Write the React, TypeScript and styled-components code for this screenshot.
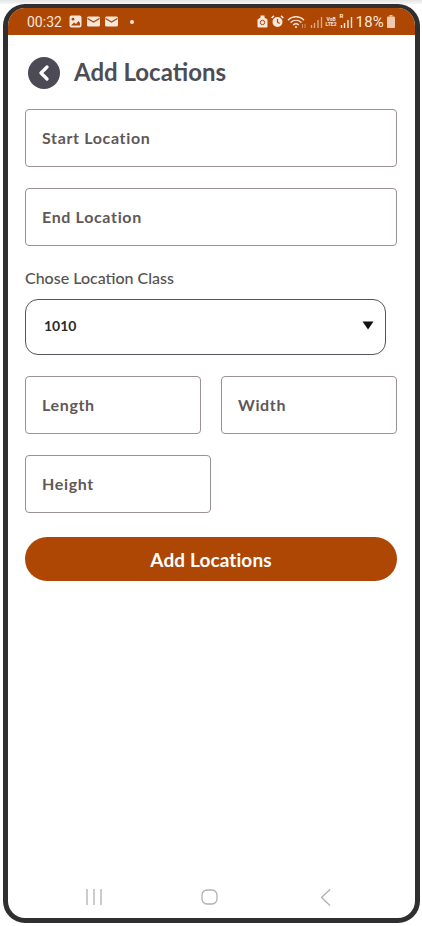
import React from 'react'
import styled, { createGlobalStyle } from 'styled-components'

const GlobalStyle = createGlobalStyle`
  html, body {
    margin: 0;
    padding: 0;
    background: #fff;
  }
  * {
    box-sizing: border-box;
  }
`

const Page = styled.div`
  width: 422px;
  height: 926px;
  padding: 4px 2px 3px 3px;
  background: linear-gradient(#e4e4e4 0, #f6f6f6 4px, #fff 4px);
  font-family: Lato, "Liberation Sans", sans-serif;
`

const Phone = styled.div`
  display: flex;
  flex-direction: column;
  height: 100%;
  overflow: hidden;
  background: #fff;
  border: 5px solid #2f2f31;
  border-top-width: 4px;
  border-radius: 22px;
`

const StatusBar = styled.div`
  display: flex;
  align-items: center;
  justify-content: space-between;
  flex: none;
  height: 27px;
  padding: 0 20px 0 19px;
  color: #f7e6da;
  background: #ae4604;
  font-family: Roboto, sans-serif;
`

const StatusGroup = styled.div`
  display: flex;
  align-items: center;
  gap: ${({ $gap }: { $gap: number }) => $gap}px;
`

const Clock = styled.span`
  margin-right: 2px;
  font-size: 14px;
`

const Battery = styled.span`
  font-size: 15px;
  letter-spacing: 0.2px;
`

const TinyLabel = styled.span`
  font-size: 5px;
  font-weight: 700;
  line-height: 5px;
  text-align: center;
`

const RoamingSignal = styled.span`
  position: relative;
  display: flex;
`

const RoamingMark = styled.span`
  position: absolute;
  top: -3px;
  left: 0;
  font-size: 6px;
  font-weight: 700;
  line-height: 6px;
`

const Dot = styled.span`
  width: 4px;
  height: 4px;
  margin-left: 7px;
  background: #f7e6da;
  border-radius: 50%;
`

const Content = styled.main`
  display: flex;
  flex: 1;
  flex-direction: column;
  padding: 0 18px 0 17px;
`

const Header = styled.header`
  display: flex;
  align-items: center;
  gap: 14px;
  height: 46px;
  margin: 15px 0 13px 3px;
`

const BackButton = styled.button`
  display: flex;
  align-items: center;
  justify-content: center;
  width: 32px;
  height: 32px;
  padding: 0;
  background: #4b4a55;
  border: none;
  border-radius: 50%;
`

const Title = styled.h1`
  margin: 0 0 3px;
  color: #4e4d55;
  font-size: 24px;
  font-weight: 700;
  line-height: 30px;
`

const Form = styled.form`
  display: flex;
  flex-direction: column;
`

const Field = styled.input<{ $width?: number }>`
  display: block;
  flex: none;
  width: ${({ $width }) => ($width ? `${$width}px` : '100%')};
  height: 58px;
  padding: 0 16px 2px;
  background: #fff;
  border: 1px solid #9a9294;
  border-radius: 4px;
  outline: none;
  font-family: inherit;
  font-size: 16px;
  font-weight: 700;
  letter-spacing: 0.65px;

  &::placeholder {
    color: #5f5858;
    opacity: 1;
  }
`

const Stack = styled.div`
  display: flex;
  flex-direction: column;
  gap: 21px;
`

const Label = styled.label`
  margin: 22px 0 11px;
  color: #55524f;
  font-size: 16px;
  font-weight: 500;
  line-height: 20px;
`

const Select = styled.div`
  display: flex;
  align-items: center;
  justify-content: space-between;
  width: 361px;
  height: 56px;
  padding: 0 11px 3px 18px;
  color: #2b2b2b;
  background: #fff;
  border: 1px solid #55545a;
  border-radius: 13px;
  font-size: 14px;
  font-weight: 700;
`

const SizeRow = styled.div`
  display: flex;
  justify-content: space-between;
  margin: 21px 0;
`

const SubmitButton = styled.button`
  width: 100%;
  height: 44px;
  margin-top: 24px;
  color: #fff;
  background: #ae4604;
  border: none;
  border-radius: 22px;
  font-family: inherit;
  font-size: 19px;
  font-weight: 700;
  letter-spacing: 0.1px;
`

const NavBar = styled.nav`
  display: flex;
  align-items: center;
  justify-content: space-between;
  flex: none;
  height: 42px;
  padding: 0 84px 0 77px;
`

const HomeIcon = styled.svg`
  margin: 0 2px 0 -2px;
`

const PhotoIcon = () => (
  <svg width="13" height="13" viewBox="0 0 13 13">
    <rect x="0.5" y="0.5" width="12" height="12" rx="2" fill="#f7e6da" />
    <circle cx="4" cy="4.2" r="1.4" fill="#ae4604" />
    <path d="M2 10.5 5 7.5 7 9l2.5-3L11 8v2.5z" fill="#ae4604" />
  </svg>
)

const MailIcon = () => (
  <svg width="13" height="11" viewBox="0 0 13 11">
    <rect y="0.5" width="13" height="10" rx="1.5" fill="#f7e6da" />
    <path d="M0.5 2.5 6.5 6l6-3.5" fill="none" stroke="#ae4604" strokeWidth="1.3" />
  </svg>
)

const SimIcon = () => (
  <svg width="11" height="13" viewBox="0 0 11 13">
    <path d="M3.5 0.5h4v2l3 2v7a1 1 0 0 1-1 1h-8a1 1 0 0 1-1-1v-7l3-2z" fill="#f7e6da" />
    <circle cx="5.5" cy="7.5" r="2.2" fill="none" stroke="#ae4604" />
  </svg>
)

const AlarmIcon = () => (
  <svg width="13" height="13" viewBox="0 0 13 13">
    <circle cx="6.5" cy="7" r="5" fill="#f7e6da" />
    <path d="M6.5 4v3.2L8.6 8.4" fill="none" stroke="#ae4604" strokeWidth="1.2" />
    <path d="M0.6 3 3 0.8M12.4 3 10 0.8" stroke="#f7e6da" strokeWidth="1.6" />
  </svg>
)

const WifiIcon = () => (
  <svg width="20" height="14" viewBox="0 0 20 14" fill="none" stroke="#f7e6da">
    <path d="M1 5.2C5.5 0.6 12.5 0.6 17 5.2" strokeWidth="1.4" />
    <path d="M3.6 7.6C6.8 4.6 11.2 4.6 14.4 7.6" strokeWidth="1.4" />
    <path d="M6.2 10C8 8.5 10 8.5 11.8 10" strokeWidth="1.4" />
    <circle cx="9" cy="12" r="1" fill="#f7e6da" stroke="none" />
    <path d="M15.5 9v4M18 9v4" strokeWidth="0.8" opacity="0.6" />
  </svg>
)

const SignalIcon = ({ faded }: { faded?: boolean }) => (
  <svg width="13" height="12" viewBox="0 0 13 12" stroke="#f7e6da" strokeWidth="1.4" opacity={faded ? 0.6 : 1}>
    <path d="M1.5 12V9M4.500 12V7M8 12V4M11.500 12V1" />
  </svg>
)

const BatteryIcon = () => (
  <svg width="8" height="13" viewBox="0 0 8 13">
    <rect x="2.500" y="0" width="3" height="1.500" fill="#f0c9ae" />
    <rect x="0" y="1.500" width="8" height="11.500" rx="1" fill="#f0c9ae" />
  </svg>
)

const App: React.FC = () => (
  <>
    <GlobalStyle />
    <Page>
      <Phone>
        <StatusBar>
          <StatusGroup $gap={5}>
            <Clock>00:32</Clock>
            <PhotoIcon />
            <MailIcon />
            <MailIcon />
            <Dot />
          </StatusGroup>
          <StatusGroup $gap={3}>
            <SimIcon />
            <AlarmIcon />
            <WifiIcon />
            <SignalIcon faded />
            <TinyLabel>
              VoB
              <br />
              LTE2
            </TinyLabel>
            <RoamingSignal>
              <RoamingMark>R</RoamingMark>
              <SignalIcon />
            </RoamingSignal>
            <Battery>18%</Battery>
            <BatteryIcon />
          </StatusGroup>
        </StatusBar>
        <Content>
          <Header>
            <BackButton type="button" aria-label="Back">
              <svg width="14" height="16" viewBox="0 0 14 16" fill="none">
                <path d="M10 2 4 8l6 6" stroke="#fff" strokeWidth="3.200" strokeLinecap="round" strokeLinejoin="round" />
              </svg>
            </BackButton>
            <Title>Add Locations</Title>
          </Header>
          <Form>
            <Stack>
              <Field placeholder="Start Location" />
              <Field placeholder="End Location" />
            </Stack>
            <Label>Chose Location Class</Label>
            <Select>
              1010
              <svg width="12" height="9" viewBox="0 0 12 9">
                <path d="M0.500 0.500h11L6 8.500z" fill="#111" />
              </svg>
            </Select>
            <SizeRow>
              <Field $width={176} placeholder="Length" />
              <Field $width={176} placeholder="Width" />
            </SizeRow>
            <Field $width={186} placeholder="Height" />
            <SubmitButton type="button">Add Locations</SubmitButton>
          </Form>
        </Content>
        <NavBar>
          <svg width="18" height="16" viewBox="0 0 18 16" stroke="#b0b0b0" strokeWidth="1.300">
            <path d="M2 0v16M9 0v16M16 0v16" />
          </svg>
          <HomeIcon width="17" height="16" viewBox="0 0 17 16" fill="none" stroke="#b0b0b0" strokeWidth="1.300">
            <rect x="1" y="1" width="15" height="14" rx="5" />
          </HomeIcon>
          <svg width="11" height="17" viewBox="0 0 11 17" fill="none" stroke="#b0b0b0" strokeWidth="1.300">
            <path d="M10 0.500 1.500 8.500l8.500 8" />
          </svg>
        </NavBar>
      </Phone>
    </Page>
  </>
)

export default App
